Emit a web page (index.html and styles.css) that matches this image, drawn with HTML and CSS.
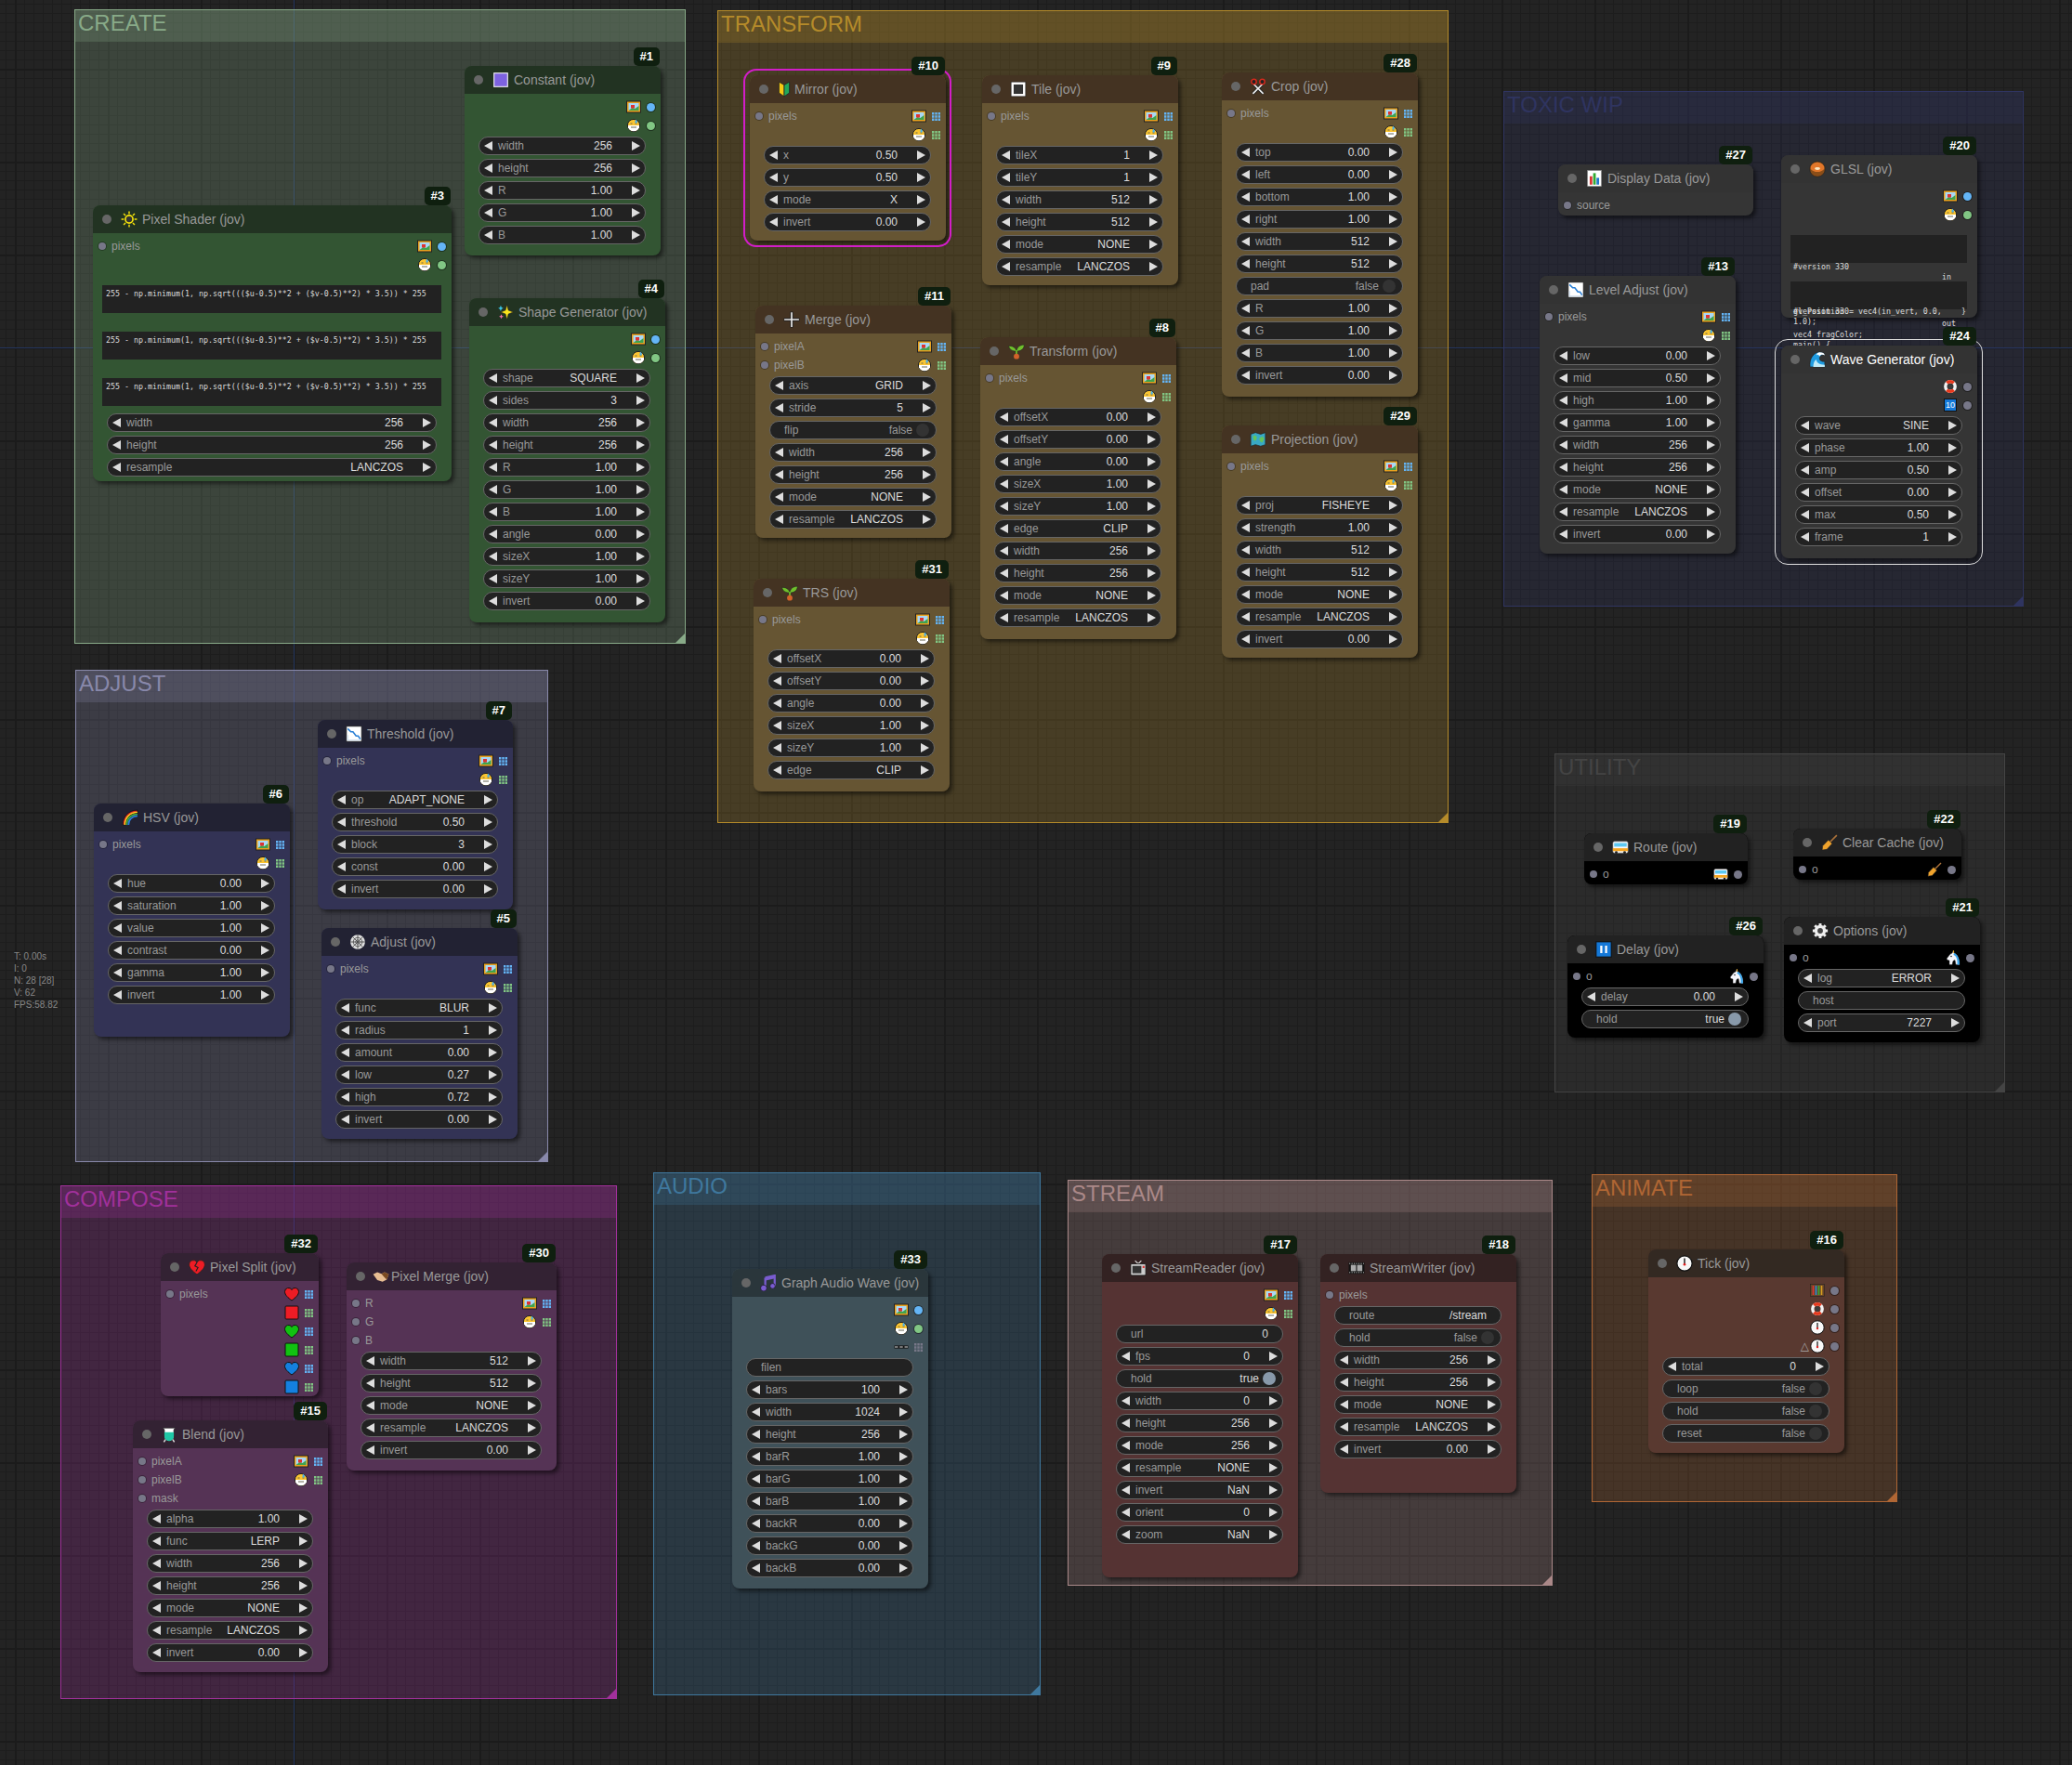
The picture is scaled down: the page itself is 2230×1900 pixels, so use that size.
FILE: index.html
```html
<!DOCTYPE html>
<html>
<head>
    <title>ComfyUI - Jovimetrix</title>
    <link rel="stylesheet" href="styles.css">
</head>
<body>
<svg class="sprite" xmlns="http://www.w3.org/2000/svg">
    <symbol id="pic" viewBox="0 0 16 16"><rect x=".5" y="2" width="15" height="12" fill="#e9a21f" stroke="#222"/><rect x="2.5" y="4" width="11" height="8" fill="#a9d8f5"/><path d="M2.5 12l4-3 3 1 4-3v5z" fill="#3fa34d"/><rect x="5" y="6" width="4" height="3.5" fill="#d33"/></symbol>
    <symbol id="mask" viewBox="0 0 16 16"><circle cx="8" cy="8" r="6.6" fill="#fbc531" stroke="#222"/><path d="M2 8h12v2.200a6.500 6.500 0 0 1-12 0z" fill="#fff"/><path d="M4.500 6h2M9.500 6h2M5 10h6" stroke="#665" fill="none"/><path d="M10.500 1.500c1 1.300 1.800 2.300 1.300 3.200a1.200 1.200 0 0 1-2.300 0c-.4-.9.500-1.900 1-3.200z" fill="#4ab0e8"/></symbol>
    <symbol id="grid" viewBox="0 0 9 9"><path d="M0 0h2.4v2.4H0zM3.3 0h2.4v2.4H3.3zM6.6 0H9v2.4H6.6zM0 3.3h2.4v2.4H0zM3.3 3.3h2.4v2.4H3.3zM6.6 3.3H9v2.4H6.6zM0 6.6h2.4V9H0zM3.3 6.6h2.4V9H3.3zM6.6 6.6H9V9H6.6z" fill="currentColor"/></symbol>
    <symbol id="sun" viewBox="0 0 16 16"><circle cx="8" cy="8" r="3.6" fill="#333" stroke="#f4e20c" stroke-width="1.5"/><path d="M8 .5V3M8 13v2.5M.5 8H3M13 8h2.500M2.700 2.700l1.800 1.800M11.500 11.500l1.800 1.800M2.700 13.300l1.800-1.800M11.500 4.500l1.800-1.800" stroke="#f4e20c" stroke-width="1.300"/></symbol>
    <symbol id="sq" viewBox="0 0 16 16"><rect x="1.500" y="1.500" width="13" height="13" fill="#7d62e0" stroke="#eee"/></symbol>
    <symbol id="spark" viewBox="0 0 16 16"><path d="M9.500 1l1.300 5.200L15.500 8l-4.700 1.800L9.500 15 8 9.800 3.500 8 8 6.200z" fill="#fbe31c" stroke="#222" stroke-width=".5"/><path d="M3.500 1.500l.8 2 1.700.7-1.700.8-.8 2-.8-2L1 4.200l1.700-.7z" fill="#3ac7e8"/><path d="M4 10l.7 1.600 1.500.6-1.500.6L4 14.500l-.7-1.700-1.500-.6 1.500-.6z" fill="#f06fa8"/></symbol>
    <symbol id="mirror" viewBox="0 0 16 16"><path d="M3 1l5 3v11L3 11.500z" fill="#f6c913" stroke="#222" stroke-width=".7"/><path d="M13 1L8 4v11l5-3.500z" fill="#23a85a" stroke="#222" stroke-width=".7"/></symbol>
    <symbol id="tile" viewBox="0 0 16 16"><rect x="1" y="1" width="14" height="14" fill="#fff" stroke="#222" stroke-width=".6"/><rect x="3.500" y="3.500" width="9" height="9" fill="#333"/></symbol>
    <symbol id="crop" viewBox="0 0 16 16"><path d="M4 6l9 9M12 6l-9 9" stroke="#222" stroke-width="3"/><path d="M4 6l9 9M12 6l-9 9" stroke="#eee" stroke-width="1.500"/><circle cx="4" cy="3.500" r="2.400" fill="#222" stroke="#d6281c" stroke-width="1.300"/><circle cx="12" cy="3.500" r="2.400" fill="#222" stroke="#d6281c" stroke-width="1.300"/></symbol>
    <symbol id="plus" viewBox="0 0 16 16"><path d="M8 .5v15M.5 8h15" stroke="#222" stroke-width="3"/><path d="M8 1v14M1 8h14" stroke="#e8e8e8" stroke-width="1.500"/></symbol>
    <symbol id="seed" viewBox="0 0 16 16"><path d="M8 8C7 4 4 3 .5 3c1 4 4 5 7.500 5zM8 8c.5-4 3-6 7.500-6-.5 4-3 6-7.500 6z" fill="#6fc02c" stroke="#222" stroke-width=".5"/><path d="M8 7v4" stroke="#6fc02c" stroke-width="1.500"/><circle cx="8" cy="13" r="2.600" fill="#d2622a"/></symbol>
    <symbol id="map" viewBox="0 0 16 16"><path d="M1 3l4.500-1.500 5 1.500L15 1.500V13l-4.500 1.500-5-1.500L1 14.500z" fill="#39a9c4" stroke="#222" stroke-width=".6"/><path d="M3 5l2-1 2 2-1 3-2 0zM9 7l3-2 2 2-2 4-2-1z" fill="#63c45b"/></symbol>
    <symbol id="bars" viewBox="0 0 16 16"><rect x="1.500" y=".5" width="13" height="15" fill="#fff" stroke="#999" stroke-width=".6"/><rect x="3.500" y="6" width="2.500" height="8" fill="#d33"/><rect x="6.800" y="3" width="2.500" height="11" fill="#3a3"/><rect x="10" y="7.500" width="2.500" height="6.500" fill="#27c"/></symbol>
    <symbol id="donut" viewBox="0 0 16 16"><circle cx="8" cy="8" r="7.400" fill="#8a4d18" stroke="#222" stroke-width=".6"/><path d="M1.500 7a6.500 5.500 0 0 1 13 0c0 2-2 2-3 3-2 1-5 1-7 0-1-1-3-1-3-3z" fill="#e2772a"/><ellipse cx="8" cy="7.500" rx="2.600" ry="1.300" fill="#fbe7c2"/></symbol>
    <symbol id="down" viewBox="0 0 16 16"><rect x=".8" y=".8" width="14.400" height="14.400" fill="#fff" stroke="#222" stroke-width=".6"/><path d="M2 3l3 3 2 0 3 4 2 0 2 3" fill="none" stroke="#2a7fd5" stroke-width="1.400"/><path d="M2 9v5h12" stroke="#cde" fill="none"/></symbol>
    <symbol id="wave" viewBox="0 0 16 16"><path d="M1 15C0 8 4 1 10 1c3 0 5 1 5 3-2-1-5 0-5 3 0 2 2 3 5 3v5z" fill="#1f9be0" stroke="#222" stroke-width=".5"/><path d="M10 1c3 0 5 1 5 3-2-1-4-1-5 1-1-2-2-2-3-1 0-2 2-3 3-3z" fill="#fff"/><path d="M4 15c0-3 1-6 3-7 0 3 3 5 8 5v2z" fill="#bfeaf7"/></symbol>
    <symbol id="rainbow" viewBox="0 0 16 16"><path d="M1 15C1 7 7 1 15 1v3C8.500 4 4 8.500 4 15z" fill="#e52d27" stroke="#111" stroke-width=".7"/><path d="M3 15C3 8 8 3 15 3" fill="none" stroke="#f7d51d" stroke-width="1.300"/><path d="M4.800 15c0-6 4.500-10.200 10.200-10.200" fill="none" stroke="#3bb64a" stroke-width="1.300"/><path d="M6.500 15c0-5 3.700-8.500 8.500-8.500" fill="none" stroke="#2d7ee0" stroke-width="1.500"/></symbol>
    <symbol id="web" viewBox="0 0 16 16"><circle cx="8" cy="8" r="7" fill="#ddd"/><path d="M8 1v14M1 8h14M3 3l10 10M13 3L3 13" stroke="#444" stroke-width=".7"/><circle cx="8" cy="8" r="4.200" fill="none" stroke="#444" stroke-width=".7"/><circle cx="8" cy="8" r="2" fill="none" stroke="#444" stroke-width=".7"/></symbol>
    <symbol id="broken" viewBox="0 0 16 16"><path d="M8 15C4 12 .5 9 .5 5.500A4 4 0 0 1 8 3.500a4 4 0 0 1 7.500 2C15.500 9 12 12 8 15z" fill="#ee1c25" stroke="#222" stroke-width=".7"/><path d="M8 3.500L6 7l3 1.500L7 12" fill="none" stroke="#222" stroke-width="1"/></symbol>
    <symbol id="heart" viewBox="0 0 16 16"><path d="M8 15C4 12 .5 9 .5 5.500A4 4 0 0 1 8 3.500a4 4 0 0 1 7.500 2C15.500 9 12 12 8 15z" fill="currentColor" stroke="#111"/></symbol>
    <symbol id="square" viewBox="0 0 16 16"><rect x="1" y="1" width="14" height="14" rx="1" fill="currentColor" stroke="#111"/></symbol>
    <symbol id="shake" viewBox="0 0 16 16"><path d="M.5 6l4-2 4 1.500 3-1.500 4 2-2 5-4 2-5-1.500z" fill="#e8be93"/><path d="M8.500 5.500l3-1.500 4 2-2 5-3-3z" fill="#7a4a22"/></symbol>
    <symbol id="flask" viewBox="0 0 16 16"><path d="M2 2h12l-1.500 1.500V10a4 4 0 0 1-9 0V3.500z" fill="#fff" stroke="#222" stroke-width=".6"/><path d="M3.500 6h9v4a4 4 0 0 1-9 0z" fill="#1fc7a6"/><path d="M4.500 13L3 15.500M11.500 13l1.500 2.500" stroke="#ddd" stroke-width="1.300"/></symbol>
    <symbol id="notes" viewBox="0 0 16 16"><path d="M5 3l9-2v10M5 3v10" fill="none" stroke="#7a5cd0" stroke-width="2"/><path d="M5 4.500l9-2" stroke="#7a5cd0" stroke-width="2.500"/><circle cx="3.500" cy="13" r="3" fill="#7a5cd0" stroke="#111" stroke-width=".6"/><circle cx="12" cy="11" r="2.500" fill="#7a5cd0" stroke="#111" stroke-width=".6"/></symbol>
    <symbol id="tv" viewBox="0 0 16 16"><path d="M5 1l3 3 3-3" fill="none" stroke="#ddd"/><rect x=".8" y="4" width="14.400" height="11" rx="1" fill="#ccc" stroke="#111" stroke-width=".7"/><rect x="2.500" y="6" width="8.500" height="7" fill="#333"/><rect x="12.200" y="6" width="1.800" height="2" fill="#d33"/></symbol>
    <symbol id="film" viewBox="0 0 16 16"><rect x=".5" y="2.500" width="15" height="11" fill="#111"/><rect x="2.500" y="5" width="5" height="6" fill="#aaa"/><rect x="8.500" y="5" width="5" height="6" fill="#aaa"/><path d="M1 3.700h14M1 12.300h14" stroke="#ddd" stroke-dasharray="1 1.200" stroke-width=".8"/></symbol>
    <symbol id="bus" viewBox="0 0 16 16"><rect x=".8" y="2.500" width="14.400" height="11" rx="1.500" fill="#f9fafc" stroke="#777" stroke-width=".5"/><rect x="2" y="4" width="12" height="3.500" fill="#5cc8f2"/><rect x=".8" y="9" width="14.400" height="2.800" fill="#f5a623"/><circle cx="4" cy="13" r="1.300" fill="#222"/><circle cx="12" cy="13" r="1.300" fill="#222"/></symbol>
    <symbol id="broom" viewBox="0 0 16 16"><path d="M15 1L8 8" stroke="#a9713a" stroke-width="1.500"/><path d="M7 5.500L10.500 9 5.500 14.500 1 15.200l.5-4z" fill="#f0a32c" stroke="#222" stroke-width=".5"/></symbol>
    <symbol id="pause" viewBox="0 0 16 16"><rect x=".7" y=".7" width="14.600" height="14.600" fill="#1478d8" stroke="#111"/><path d="M5.700 4.500v7M10.300 4.500v7" stroke="#fff" stroke-width="2"/></symbol>
    <symbol id="gear" viewBox="0 0 16 16"><circle cx="8" cy="8" r="5.500" fill="#eee"/><path d="M8 .8v14.400M.8 8h14.400M2.900 2.900l10.200 10.200M13.100 2.900L2.900 13.100" stroke="#eee" stroke-width="2.600"/><circle cx="8" cy="8" r="2.600" fill="#444"/></symbol>
    <symbol id="clock" viewBox="0 0 16 16"><circle cx="8" cy="8" r="7.200" fill="#f8f8f8" stroke="#111"/><path d="M8 3v5" stroke="#222" stroke-width="1.300"/><circle cx="8" cy="9" r="1.200" fill="#d22"/></symbol>
    <symbol id="uni" viewBox="0 0 16 16"><path d="M4 15.500V11L2 10.500 1 9l4-5 2-1 1-2.500L9 3c3.500 1 6 5.500 6 12.500h-4l-1-5-2 1-1 4z" fill="#f6f6fb" stroke="#222" stroke-width=".5"/><path d="M8 .5l1-.5.2 3-1 .2z" fill="#f6b93b"/><path d="M9 3c3.500 1 6 5.500 6 12.500h-2.500C13 10 11.500 6 8.500 5z" fill="#38a6ee"/><circle cx="6" cy="6.500" r=".8" fill="#222"/></symbol>
    <symbol id="ring" viewBox="0 0 16 16"><circle cx="8" cy="8" r="5.200" fill="none" stroke="#f2f2f2" stroke-width="3.400"/><path d="M4.300 4.300a5.200 5.200 0 0 1 7.400 0M11.700 11.700a5.200 5.200 0 0 1-7.400 0" fill="none" stroke="#e8391d" stroke-width="3.400"/><circle cx="8" cy="8" r="2.400" fill="#3b3b3b"/></symbol>
    <symbol id="books" viewBox="0 0 16 16"><rect x=".5" y="1.500" width="15" height="13" fill="#6a4527" stroke="#222" stroke-width=".6"/><path d="M3.500 3v10" stroke="#d33" stroke-width="1.600"/><path d="M6.500 3v10" stroke="#2a8ad6" stroke-width="1.600"/><path d="M9.500 3v10" stroke="#3a3" stroke-width="1.600"/><path d="M12.500 3v10" stroke="#d8a020" stroke-width="1.600"/></symbol>
    <symbol id="dash" viewBox="0 0 16 16"><path d="M.5 8h15" stroke="#111" stroke-width="3.200"/><path d="M1 8h3.500M6.200 8h3.500M11.500 8H15" stroke="#999" stroke-width="1.300"/></symbol>
</svg>

<div class="canvas">
    <div class="axis-v"></div>
    <div class="axis-h"></div>

    <section class="grp create"><h2>CREATE</h2></section>
    <section class="grp transform"><h2>TRANSFORM</h2></section>
    <section class="grp toxic"><h2>TOXIC WIP</h2></section>
    <section class="grp adjust"><h2>ADJUST</h2></section>
    <section class="grp utility"><h2>UTILITY</h2></section>
    <section class="grp compose"><h2>COMPOSE</h2></section>
    <section class="grp audio"><h2>AUDIO</h2></section>
    <section class="grp stream"><h2>STREAM</h2></section>
    <section class="grp animate"><h2>ANIMATE</h2></section>

    <div class="stats">T: 0.00s<br>I: 0<br>N: 28 [28]<br>V: 62<br>FPS:58.82</div>

    <!-- CREATE -->
    <article class="node green n1">
        <span class="badge">#1</span>
        <header><i></i><svg><use href="#sq"/></svg>Constant (jov)</header>
        <div class="slots">
            <div class="s"><svg class="ic"><use href="#pic"/></svg><u class="o blue"></u></div>
            <div class="s"><svg class="ic"><use href="#mask"/></svg><u class="o lime"></u></div>
        </div>
        <div class="w"><b>width</b><i>256</i></div>
        <div class="w"><b>height</b><i>256</i></div>
        <div class="w"><b>R</b><i>1.00</i></div>
        <div class="w"><b>G</b><i>1.00</i></div>
        <div class="w"><b>B</b><i>1.00</i></div>
    </article>
    <article class="node green n3">
        <span class="badge">#3</span>
        <header><i></i><svg><use href="#sun"/></svg>Pixel Shader (jov)</header>
        <div class="slots">
            <div class="s"><em>pixels</em><svg class="ic"><use href="#pic"/></svg><u class="o blue"></u></div>
            <div class="s"><svg class="ic"><use href="#mask"/></svg><u class="o lime"></u></div>
        </div>
        <div class="ta">255 - np.minimum(1, np.sqrt((($u-0.5)**2 + ($v-0.5)**2) * 3.5)) * 255</div>
        <div class="ta">255 - np.minimum(1, np.sqrt((($u-0.5)**2 + ($v-0.5)**2) * 3.5)) * 255</div>
        <div class="ta">255 - np.minimum(1, np.sqrt((($u-0.5)**2 + ($v-0.5)**2) * 3.5)) * 255</div>
        <div class="w"><b>width</b><i>256</i></div>
        <div class="w"><b>height</b><i>256</i></div>
        <div class="w"><b>resample</b><i>LANCZOS</i></div>
    </article>
    <article class="node green n4">
        <span class="badge">#4</span>
        <header><i></i><svg><use href="#spark"/></svg>Shape Generator (jov)</header>
        <div class="slots">
            <div class="s"><svg class="ic"><use href="#pic"/></svg><u class="o blue"></u></div>
            <div class="s"><svg class="ic"><use href="#mask"/></svg><u class="o lime"></u></div>
        </div>
        <div class="w"><b>shape</b><i>SQUARE</i></div>
        <div class="w"><b>sides</b><i>3</i></div>
        <div class="w"><b>width</b><i>256</i></div>
        <div class="w"><b>height</b><i>256</i></div>
        <div class="w"><b>R</b><i>1.00</i></div>
        <div class="w"><b>G</b><i>1.00</i></div>
        <div class="w"><b>B</b><i>1.00</i></div>
        <div class="w"><b>angle</b><i>0.00</i></div>
        <div class="w"><b>sizeX</b><i>1.00</i></div>
        <div class="w"><b>sizeY</b><i>1.00</i></div>
        <div class="w"><b>invert</b><i>0.00</i></div>
    </article>

    <!-- TRANSFORM -->
    <article class="node yellow n10 sel-pink nar">
        <span class="badge">#10</span>
        <header><i></i><svg><use href="#mirror"/></svg>Mirror (jov)</header>
        <div class="slots">
            <div class="s"><em>pixels</em><svg class="ic"><use href="#pic"/></svg><svg class="g blue"><use href="#grid"/></svg></div>
            <div class="s"><svg class="ic"><use href="#mask"/></svg><svg class="g lime"><use href="#grid"/></svg></div>
        </div>
        <div class="w"><b>x</b><i>0.50</i></div>
        <div class="w"><b>y</b><i>0.50</i></div>
        <div class="w"><b>mode</b><i>X</i></div>
        <div class="w"><b>invert</b><i>0.00</i></div>
    </article>
    <article class="node yellow n9">
        <span class="badge">#9</span>
        <header><i></i><svg><use href="#tile"/></svg>Tile (jov)</header>
        <div class="slots">
            <div class="s"><em>pixels</em><svg class="ic"><use href="#pic"/></svg><svg class="g blue"><use href="#grid"/></svg></div>
            <div class="s"><svg class="ic"><use href="#mask"/></svg><svg class="g lime"><use href="#grid"/></svg></div>
        </div>
        <div class="w"><b>tileX</b><i>1</i></div>
        <div class="w"><b>tileY</b><i>1</i></div>
        <div class="w"><b>width</b><i>512</i></div>
        <div class="w"><b>height</b><i>512</i></div>
        <div class="w"><b>mode</b><i>NONE</i></div>
        <div class="w"><b>resample</b><i>LANCZOS</i></div>
    </article>
    <article class="node yellow n28">
        <span class="badge">#28</span>
        <header><i></i><svg><use href="#crop"/></svg>Crop (jov)</header>
        <div class="slots">
            <div class="s"><em>pixels</em><svg class="ic"><use href="#pic"/></svg><svg class="g blue"><use href="#grid"/></svg></div>
            <div class="s"><svg class="ic"><use href="#mask"/></svg><svg class="g lime"><use href="#grid"/></svg></div>
        </div>
        <div class="w"><b>top</b><i>0.00</i></div>
        <div class="w"><b>left</b><i>0.00</i></div>
        <div class="w"><b>bottom</b><i>1.00</i></div>
        <div class="w"><b>right</b><i>1.00</i></div>
        <div class="w"><b>width</b><i>512</i></div>
        <div class="w"><b>height</b><i>512</i></div>
        <div class="w tg"><b>pad</b><i>false</i></div>
        <div class="w"><b>R</b><i>1.00</i></div>
        <div class="w"><b>G</b><i>1.00</i></div>
        <div class="w"><b>B</b><i>1.00</i></div>
        <div class="w"><b>invert</b><i>0.00</i></div>
    </article>
    <article class="node yellow n11">
        <span class="badge">#11</span>
        <header><i></i><svg><use href="#plus"/></svg>Merge (jov)</header>
        <div class="slots">
            <div class="s"><em>pixelA</em><svg class="ic"><use href="#pic"/></svg><svg class="g blue"><use href="#grid"/></svg></div>
            <div class="s"><em>pixelB</em><svg class="ic"><use href="#mask"/></svg><svg class="g lime"><use href="#grid"/></svg></div>
        </div>
        <div class="w"><b>axis</b><i>GRID</i></div>
        <div class="w"><b>stride</b><i>5</i></div>
        <div class="w tg"><b>flip</b><i>false</i></div>
        <div class="w"><b>width</b><i>256</i></div>
        <div class="w"><b>height</b><i>256</i></div>
        <div class="w"><b>mode</b><i>NONE</i></div>
        <div class="w"><b>resample</b><i>LANCZOS</i></div>
    </article>
    <article class="node yellow n8">
        <span class="badge">#8</span>
        <header><i></i><svg><use href="#seed"/></svg>Transform (jov)</header>
        <div class="slots">
            <div class="s"><em>pixels</em><svg class="ic"><use href="#pic"/></svg><svg class="g blue"><use href="#grid"/></svg></div>
            <div class="s"><svg class="ic"><use href="#mask"/></svg><svg class="g lime"><use href="#grid"/></svg></div>
        </div>
        <div class="w"><b>offsetX</b><i>0.00</i></div>
        <div class="w"><b>offsetY</b><i>0.00</i></div>
        <div class="w"><b>angle</b><i>0.00</i></div>
        <div class="w"><b>sizeX</b><i>1.00</i></div>
        <div class="w"><b>sizeY</b><i>1.00</i></div>
        <div class="w"><b>edge</b><i>CLIP</i></div>
        <div class="w"><b>width</b><i>256</i></div>
        <div class="w"><b>height</b><i>256</i></div>
        <div class="w"><b>mode</b><i>NONE</i></div>
        <div class="w"><b>resample</b><i>LANCZOS</i></div>
    </article>
    <article class="node yellow n29">
        <span class="badge">#29</span>
        <header><i></i><svg><use href="#map"/></svg>Projection (jov)</header>
        <div class="slots">
            <div class="s"><em>pixels</em><svg class="ic"><use href="#pic"/></svg><svg class="g blue"><use href="#grid"/></svg></div>
            <div class="s"><svg class="ic"><use href="#mask"/></svg><svg class="g lime"><use href="#grid"/></svg></div>
        </div>
        <div class="w"><b>proj</b><i>FISHEYE</i></div>
        <div class="w"><b>strength</b><i>1.00</i></div>
        <div class="w"><b>width</b><i>512</i></div>
        <div class="w"><b>height</b><i>512</i></div>
        <div class="w"><b>mode</b><i>NONE</i></div>
        <div class="w"><b>resample</b><i>LANCZOS</i></div>
        <div class="w"><b>invert</b><i>0.00</i></div>
    </article>
    <article class="node yellow n31">
        <span class="badge">#31</span>
        <header><i></i><svg><use href="#seed"/></svg>TRS (jov)</header>
        <div class="slots">
            <div class="s"><em>pixels</em><svg class="ic"><use href="#pic"/></svg><svg class="g blue"><use href="#grid"/></svg></div>
            <div class="s"><svg class="ic"><use href="#mask"/></svg><svg class="g lime"><use href="#grid"/></svg></div>
        </div>
        <div class="w"><b>offsetX</b><i>0.00</i></div>
        <div class="w"><b>offsetY</b><i>0.00</i></div>
        <div class="w"><b>angle</b><i>0.00</i></div>
        <div class="w"><b>sizeX</b><i>1.00</i></div>
        <div class="w"><b>sizeY</b><i>1.00</i></div>
        <div class="w"><b>edge</b><i>CLIP</i></div>
    </article>

    <!-- TOXIC WIP -->
    <article class="node plain n27">
        <span class="badge">#27</span>
        <header><i></i><svg><use href="#bars"/></svg>Display Data (jov)</header>
        <div class="slots">
            <div class="s"><em>source</em></div>
        </div>
    </article>
    <article class="node plain n20">
        <span class="badge">#20</span>
        <header><i></i><svg><use href="#donut"/></svg>GLSL (jov)</header>
        <div class="slots">
            <div class="s"><svg class="ic"><use href="#pic"/></svg><u class="o blue"></u></div>
            <div class="s"><svg class="ic"><use href="#mask"/></svg><u class="o lime"></u></div>
        </div>
        <div class="ta short"></div>
        <div class="ta short"></div>
        <span class="code c1">#version 330</span>
        <span class="code c2">in</span>
        <span class="code c3">#version 330</span>
        <span class="code c4">gl_Position = vec4(in_vert, 0.0,</span>
        <span class="code c5">}</span>
        <span class="code c6">1.0);</span>
        <span class="code c7">out</span>
        <span class="code c8">vec4 fragColor;</span>
        <span class="code c9">main() {</span>
    </article>
    <article class="node plain n13">
        <span class="badge">#13</span>
        <header><i></i><svg><use href="#down"/></svg>Level Adjust (jov)</header>
        <div class="slots">
            <div class="s"><em>pixels</em><svg class="ic"><use href="#pic"/></svg><svg class="g blue"><use href="#grid"/></svg></div>
            <div class="s"><svg class="ic"><use href="#mask"/></svg><svg class="g lime"><use href="#grid"/></svg></div>
        </div>
        <div class="w"><b>low</b><i>0.00</i></div>
        <div class="w"><b>mid</b><i>0.50</i></div>
        <div class="w"><b>high</b><i>1.00</i></div>
        <div class="w"><b>gamma</b><i>1.00</i></div>
        <div class="w"><b>width</b><i>256</i></div>
        <div class="w"><b>height</b><i>256</i></div>
        <div class="w"><b>mode</b><i>NONE</i></div>
        <div class="w"><b>resample</b><i>LANCZOS</i></div>
        <div class="w"><b>invert</b><i>0.00</i></div>
    </article>
    <article class="node plain n24 sel-white">
        <span class="badge">#24</span>
        <header><i></i><svg><use href="#wave"/></svg>Wave Generator (jov)</header>
        <div class="slots">
            <div class="s"><svg class="ic"><use href="#ring"/></svg><u class="o grey"></u></div>
            <div class="s"><span class="keycap">10</span><u class="o grey"></u></div>
        </div>
        <div class="w"><b>wave</b><i>SINE</i></div>
        <div class="w"><b>phase</b><i>1.00</i></div>
        <div class="w"><b>amp</b><i>0.50</i></div>
        <div class="w"><b>offset</b><i>0.00</i></div>
        <div class="w"><b>max</b><i>0.50</i></div>
        <div class="w"><b>frame</b><i>1</i></div>
    </article>

    <!-- ADJUST -->
    <article class="node blue-n n6">
        <span class="badge">#6</span>
        <header><i></i><svg><use href="#rainbow"/></svg>HSV (jov)</header>
        <div class="slots">
            <div class="s"><em>pixels</em><svg class="ic"><use href="#pic"/></svg><svg class="g blue"><use href="#grid"/></svg></div>
            <div class="s"><svg class="ic"><use href="#mask"/></svg><svg class="g lime"><use href="#grid"/></svg></div>
        </div>
        <div class="w"><b>hue</b><i>0.00</i></div>
        <div class="w"><b>saturation</b><i>1.00</i></div>
        <div class="w"><b>value</b><i>1.00</i></div>
        <div class="w"><b>contrast</b><i>0.00</i></div>
        <div class="w"><b>gamma</b><i>1.00</i></div>
        <div class="w"><b>invert</b><i>1.00</i></div>
    </article>
    <article class="node blue-n n7">
        <span class="badge">#7</span>
        <header><i></i><svg><use href="#down"/></svg>Threshold (jov)</header>
        <div class="slots">
            <div class="s"><em>pixels</em><svg class="ic"><use href="#pic"/></svg><svg class="g blue"><use href="#grid"/></svg></div>
            <div class="s"><svg class="ic"><use href="#mask"/></svg><svg class="g lime"><use href="#grid"/></svg></div>
        </div>
        <div class="w"><b>op</b><i>ADAPT_NONE</i></div>
        <div class="w"><b>threshold</b><i>0.50</i></div>
        <div class="w"><b>block</b><i>3</i></div>
        <div class="w"><b>const</b><i>0.00</i></div>
        <div class="w"><b>invert</b><i>0.00</i></div>
    </article>
    <article class="node blue-n n5">
        <span class="badge">#5</span>
        <header><i></i><svg><use href="#web"/></svg>Adjust (jov)</header>
        <div class="slots">
            <div class="s"><em>pixels</em><svg class="ic"><use href="#pic"/></svg><svg class="g blue"><use href="#grid"/></svg></div>
            <div class="s"><svg class="ic"><use href="#mask"/></svg><svg class="g lime"><use href="#grid"/></svg></div>
        </div>
        <div class="w"><b>func</b><i>BLUR</i></div>
        <div class="w"><b>radius</b><i>1</i></div>
        <div class="w"><b>amount</b><i>0.00</i></div>
        <div class="w"><b>low</b><i>0.27</i></div>
        <div class="w"><b>high</b><i>0.72</i></div>
        <div class="w"><b>invert</b><i>0.00</i></div>
    </article>

    <!-- UTILITY -->
    <article class="node black n19">
        <span class="badge">#19</span>
        <header><i></i><svg><use href="#bus"/></svg>Route (jov)</header>
        <div class="slots">
            <div class="s"><em>o</em><svg class="ic"><use href="#bus"/></svg><u class="o grey"></u></div>
        </div>
    </article>
    <article class="node black n22">
        <span class="badge">#22</span>
        <header><i></i><svg><use href="#broom"/></svg>Clear Cache (jov)</header>
        <div class="slots">
            <div class="s"><em>o</em><svg class="ic"><use href="#broom"/></svg><u class="o grey"></u></div>
        </div>
    </article>
    <article class="node black n26">
        <span class="badge">#26</span>
        <header><i></i><svg><use href="#pause"/></svg>Delay (jov)</header>
        <div class="slots">
            <div class="s"><em>o</em><svg class="ic"><use href="#uni"/></svg><u class="o grey"></u></div>
        </div>
        <div class="w"><b>delay</b><i>0.00</i></div>
        <div class="w tg on"><b>hold</b><i>true</i></div>
    </article>
    <article class="node black n21">
        <span class="badge">#21</span>
        <header><i></i><svg><use href="#gear"/></svg>Options (jov)</header>
        <div class="slots">
            <div class="s"><em>o</em><svg class="ic"><use href="#uni"/></svg><u class="o grey"></u></div>
        </div>
        <div class="w"><b>log</b><i>ERROR</i></div>
        <div class="w tx"><b>host</b><i></i></div>
        <div class="w"><b>port</b><i>7227</i></div>
    </article>

    <!-- COMPOSE -->
    <article class="node purple n32">
        <span class="badge">#32</span>
        <header><i></i><svg><use href="#broken"/></svg>Pixel Split (jov)</header>
        <div class="slots">
            <div class="s"><em>pixels</em><svg class="ic c-red"><use href="#heart"/></svg><svg class="g blue"><use href="#grid"/></svg></div>
            <div class="s"><svg class="ic c-red"><use href="#square"/></svg><svg class="g lime"><use href="#grid"/></svg></div>
            <div class="s"><svg class="ic c-green"><use href="#heart"/></svg><svg class="g blue"><use href="#grid"/></svg></div>
            <div class="s"><svg class="ic c-green"><use href="#square"/></svg><svg class="g lime"><use href="#grid"/></svg></div>
            <div class="s"><svg class="ic c-blue"><use href="#heart"/></svg><svg class="g blue"><use href="#grid"/></svg></div>
            <div class="s"><svg class="ic c-blue"><use href="#square"/></svg><svg class="g lime"><use href="#grid"/></svg></div>
        </div>
    </article>
    <article class="node purple n30 nar">
        <span class="badge">#30</span>
        <header><i></i><svg><use href="#shake"/></svg>Pixel Merge (jov)</header>
        <div class="slots">
            <div class="s"><em>R</em><svg class="ic"><use href="#pic"/></svg><svg class="g blue"><use href="#grid"/></svg></div>
            <div class="s"><em>G</em><svg class="ic"><use href="#mask"/></svg><svg class="g lime"><use href="#grid"/></svg></div>
            <div class="s"><em>B</em></div>
        </div>
        <div class="w"><b>width</b><i>512</i></div>
        <div class="w"><b>height</b><i>512</i></div>
        <div class="w"><b>mode</b><i>NONE</i></div>
        <div class="w"><b>resample</b><i>LANCZOS</i></div>
        <div class="w"><b>invert</b><i>0.00</i></div>
    </article>
    <article class="node purple n15">
        <span class="badge">#15</span>
        <header><i></i><svg><use href="#flask"/></svg>Blend (jov)</header>
        <div class="slots">
            <div class="s"><em>pixelA</em><svg class="ic"><use href="#pic"/></svg><svg class="g blue"><use href="#grid"/></svg></div>
            <div class="s"><em>pixelB</em><svg class="ic"><use href="#mask"/></svg><svg class="g lime"><use href="#grid"/></svg></div>
            <div class="s"><em>mask</em></div>
        </div>
        <div class="w"><b>alpha</b><i>1.00</i></div>
        <div class="w"><b>func</b><i>LERP</i></div>
        <div class="w"><b>width</b><i>256</i></div>
        <div class="w"><b>height</b><i>256</i></div>
        <div class="w"><b>mode</b><i>NONE</i></div>
        <div class="w"><b>resample</b><i>LANCZOS</i></div>
        <div class="w"><b>invert</b><i>0.00</i></div>
    </article>

    <!-- AUDIO -->
    <article class="node pale n33">
        <span class="badge">#33</span>
        <header><i></i><svg><use href="#notes"/></svg>Graph Audio Wave (jov)</header>
        <div class="slots">
            <div class="s"><svg class="ic"><use href="#pic"/></svg><u class="o blue"></u></div>
            <div class="s"><svg class="ic"><use href="#mask"/></svg><u class="o lime"></u></div>
            <div class="s"><svg class="ic"><use href="#dash"/></svg><svg class="g grey"><use href="#grid"/></svg></div>
        </div>
        <div class="w tx"><b>filen</b><i></i></div>
        <div class="w"><b>bars</b><i>100</i></div>
        <div class="w"><b>width</b><i>1024</i></div>
        <div class="w"><b>height</b><i>256</i></div>
        <div class="w"><b>barR</b><i>1.00</i></div>
        <div class="w"><b>barG</b><i>1.00</i></div>
        <div class="w"><b>barB</b><i>1.00</i></div>
        <div class="w"><b>backR</b><i>0.00</i></div>
        <div class="w"><b>backG</b><i>0.00</i></div>
        <div class="w"><b>backB</b><i>0.00</i></div>
    </article>

    <!-- STREAM -->
    <article class="node red n17">
        <span class="badge">#17</span>
        <header><i></i><svg><use href="#tv"/></svg>StreamReader (jov)</header>
        <div class="slots">
            <div class="s"><svg class="ic"><use href="#pic"/></svg><svg class="g blue"><use href="#grid"/></svg></div>
            <div class="s"><svg class="ic"><use href="#mask"/></svg><svg class="g lime"><use href="#grid"/></svg></div>
        </div>
        <div class="w tx"><b>url</b><i>0</i></div>
        <div class="w"><b>fps</b><i>0</i></div>
        <div class="w tg on"><b>hold</b><i>true</i></div>
        <div class="w"><b>width</b><i>0</i></div>
        <div class="w"><b>height</b><i>256</i></div>
        <div class="w"><b>mode</b><i>256</i></div>
        <div class="w"><b>resample</b><i>NONE</i></div>
        <div class="w"><b>invert</b><i>NaN</i></div>
        <div class="w"><b>orient</b><i>0</i></div>
        <div class="w"><b>zoom</b><i>NaN</i></div>
    </article>
    <article class="node red n18">
        <span class="badge">#18</span>
        <header><i></i><svg><use href="#film"/></svg>StreamWriter (jov)</header>
        <div class="slots">
            <div class="s"><em>pixels</em></div>
        </div>
        <div class="w tx"><b>route</b><i>/stream</i></div>
        <div class="w tg"><b>hold</b><i>false</i></div>
        <div class="w"><b>width</b><i>256</i></div>
        <div class="w"><b>height</b><i>256</i></div>
        <div class="w"><b>mode</b><i>NONE</i></div>
        <div class="w"><b>resample</b><i>LANCZOS</i></div>
        <div class="w"><b>invert</b><i>0.00</i></div>
    </article>

    <!-- ANIMATE -->
    <article class="node brown n16">
        <span class="badge">#16</span>
        <header><i></i><svg><use href="#clock"/></svg>Tick (jov)</header>
        <div class="slots">
            <div class="s"><svg class="ic"><use href="#books"/></svg><u class="o grey"></u></div>
            <div class="s"><svg class="ic"><use href="#ring"/></svg><u class="o grey"></u></div>
            <div class="s"><svg class="ic"><use href="#clock"/></svg><u class="o grey"></u></div>
            <div class="s"><span class="delta">△</span><svg class="ic"><use href="#clock"/></svg><u class="o grey"></u></div>
        </div>
        <div class="w"><b>total</b><i>0</i></div>
        <div class="w tg"><b>loop</b><i>false</i></div>
        <div class="w tg"><b>hold</b><i>false</i></div>
        <div class="w tg"><b>reset</b><i>false</i></div>
    </article>
</div>
</body>
</html>
```

FILE: styles.css
```css
* {
    box-sizing: border-box;
}

body {
    margin: 0;
    font-family: 'Liberation Sans', Arial, sans-serif;
    overflow: hidden;
}

.sprite {
    position: absolute;
    width: 0;
    height: 0;
}

/* free canvas, grid drawn like the litegraph tile */
.canvas {
    position: relative;
    width: 2230px;
    height: 1900px;
    overflow: hidden;
    background-color: #232323;
    background-image:
        linear-gradient(90deg, #1b1b1b 2px, transparent 2px),
        linear-gradient(#1b1b1b 2px, transparent 2px),
        linear-gradient(90deg, #1d1d1d 1px, transparent 1px),
        linear-gradient(#1d1d1d 1px, transparent 1px);
    background-size: 100px 100px, 100px 100px, 10px 10px, 10px 10px;
    background-position: 16px 0, 0 74px, 6px 0, 0 4px;
}

.axis-v {
    position: absolute;
    left: 316px;
    top: 0;
    width: 1px;
    height: 100%;
    background: #24365f;
}

.axis-h {
    position: absolute;
    left: 0;
    top: 374px;
    width: 100%;
    height: 1px;
    background: #24365f;
}

.stats {
    position: absolute;
    left: 15px;
    top: 1023px;
    font-size: 10px;
    line-height: 13px;
    color: #888;
}

/* groups */
.grp {
    position: absolute;
    border: 1px solid var(--g);
}

.grp::before {
    content: "";
    position: absolute;
    inset: 0;
    background: var(--g);
    opacity: 0.25;
}

.grp::after {
    content: "";
    position: absolute;
    right: 0;
    bottom: 0;
    width: 10px;
    height: 10px;
    background: var(--g);
    clip-path: polygon(100% 0, 100% 100%, 0 100%);
}

.grp h2 {
    position: relative;
    margin: 0;
    height: 34px;
    padding-left: 3px;
    font-size: 24px;
    font-weight: normal;
    line-height: 28px;
    color: var(--g);
    background: color-mix(in srgb, var(--g) 25%, transparent);
}

.create { --g: #88aa88; left: 80px; top: 10px; width: 658px; height: 683px; }
.transform { --g: #b58b2a; left: 772px; top: 11px; width: 787px; height: 875px; }
.toxic { --g: #2f3460; left: 1618px; top: 98px; width: 560px; height: 555px; }
.adjust { --g: #8888aa; left: 81px; top: 721px; width: 509px; height: 530px; }
.utility { --g: #444444; left: 1673px; top: 811px; width: 485px; height: 365px; }
.compose { --g: #a1309b; left: 65px; top: 1276px; width: 599px; height: 553px; }
.audio { --g: #3f789e; left: 703px; top: 1262px; width: 417px; height: 563px; }
.stream { --g: #aa8888; left: 1149px; top: 1270px; width: 522px; height: 437px; }
.animate { --g: #b06634; left: 1713px; top: 1264px; width: 329px; height: 353px; }

/* nodes */
.node {
    position: absolute;
    border-radius: 8px;
    background: var(--b);
    box-shadow: 3px 3px 4px rgba(0, 0, 0, 0.5);
    font-size: 12px;
    color: #999;
}

.green { --t: #223322; --b: #335533; }
.yellow { --t: #443322; --b: #665533; }
.plain { --t: #333333; --b: #353535; }
.blue-n { --t: #222233; --b: #333355; }
.black { --t: #222222; --b: #000000; }
.purple { --t: #332233; --b: #553355; }
.pale { --t: #2a363b; --b: #3f5159; }
.red { --t: #332222; --b: #553333; }
.brown { --t: #332922; --b: #593930; }

.n1 { left: 500px; top: 71px; width: 211px; height: 204px; }
.n3 { left: 100px; top: 221px; width: 386px; height: 297px; }
.n4 { left: 505px; top: 321px; width: 211px; height: 349px; }
.n10 { left: 807px; top: 81px; width: 211px; height: 178px; }
.n9 { left: 1057px; top: 81px; width: 211px; height: 226px; }
.n28 { left: 1315px; top: 78px; width: 211px; height: 349px; }
.n11 { left: 813px; top: 329px; width: 211px; height: 250px; }
.n8 { left: 1055px; top: 363px; width: 211px; height: 325px; }
.n29 { left: 1315px; top: 458px; width: 211px; height: 250px; }
.n31 { left: 811px; top: 623px; width: 211px; height: 229px; }
.n27 { left: 1677px; top: 177px; width: 210px; height: 55px; }
.n20 { left: 1917px; top: 167px; width: 211px; height: 175px; }
.n13 { left: 1657px; top: 297px; width: 211px; height: 299px; }
.n24 { left: 1917px; top: 372px; width: 211px; height: 229px; }
.n6 { left: 101px; top: 865px; width: 211px; height: 251px; }
.n7 { left: 342px; top: 775px; width: 210px; height: 204px; }
.n5 { left: 346px; top: 999px; width: 211px; height: 227px; }
.n19 { left: 1705px; top: 897px; width: 176px; height: 55px; }
.n22 { left: 1930px; top: 892px; width: 181px; height: 55px; }
.n26 { left: 1687px; top: 1007px; width: 211px; height: 110px; }
.n21 { left: 1920px; top: 987px; width: 211px; height: 135px; }
.n32 { left: 173px; top: 1349px; width: 170px; height: 154px; }
.n30 { left: 373px; top: 1359px; width: 226px; height: 224px; }
.n15 { left: 143px; top: 1529px; width: 210px; height: 271px; }
.n33 { left: 788px; top: 1366px; width: 211px; height: 344px; }
.n17 { left: 1186px; top: 1350px; width: 211px; height: 348px; }
.n18 { left: 1421px; top: 1350px; width: 211px; height: 257px; }
.n16 { left: 1774px; top: 1345px; width: 211px; height: 219px; }

.node header {
    display: flex;
    align-items: center;
    height: 30px;
    padding-left: 10px;
    border-radius: 8px 8px 0 0;
    background: var(--t);
    font-size: 14px;
    white-space: nowrap;
}

.node header i {
    width: 10px;
    height: 10px;
    border-radius: 50%;
    background: #666;
}

.node header svg {
    width: 18px;
    height: 18px;
    margin: 0 5px 0 10px;
}

.nar header svg {
    margin: 0 2px 0 8px;
}

.badge {
    position: absolute;
    right: 1px;
    bottom: 100%;
    height: 20px;
    padding: 0 7px;
    border-radius: 5px;
    background: #0f1f0f;
    color: #fff;
    font-size: 13px;
    font-weight: bold;
    line-height: 20px;
}

/* selected outline */
.sel-pink::before,
.sel-white::before {
    content: "";
    position: absolute;
    inset: -7px -6px -7px -7px;
    border-radius: 14px;
}

.sel-pink::before {
    border: 2px solid #d21dc8;
}

.sel-white::before {
    border: 1.5px solid #dcdcdc;
}

.sel-white header {
    color: #fff;
}

.sel-pink .badge,
.sel-white .badge {
    z-index: 1;
}

/* slot rows */
.slots {
    padding: 4px 0 2px;
}

.s {
    display: flex;
    align-items: center;
    justify-content: flex-end;
    gap: 6px;
    height: 20px;
    padding-right: 6px;
}

.s em {
    display: flex;
    align-items: center;
    margin-right: auto;
    padding-left: 6px;
    font-style: normal;
}

.s em::before {
    content: "";
    width: 8px;
    height: 8px;
    margin-right: 6px;
    border-radius: 50%;
    background: #778;
    box-shadow: 0 0 0 1px rgba(0, 0, 0, 0.3);
}

.ic {
    width: 16px;
    height: 16px;
}

.o {
    width: 9px;
    height: 9px;
    border-radius: 50%;
    background: currentColor;
    box-shadow: 0 0 0 1px rgba(0, 0, 0, 0.4);
}

.g {
    width: 9px;
    height: 9px;
}

.blue { color: #64b5f6; }
.lime { color: #81c784; }
.grey { color: #778; }
.c-red { color: #ee1c25; }
.c-green { color: #11c211; }
.c-blue { color: #1480e0; }

.keycap {
    width: 14px;
    height: 14px;
    margin: 0 1px;
    border: 1px solid #111;
    background: #1478d8;
    color: #fff;
    font-size: 9px;
    line-height: 12px;
    text-align: center;
}

.delta {
    margin-right: -5px;
    font-size: 12px;
    color: #aaa;
    font-family: 'DejaVu Sans', sans-serif;
}

/* widgets */
.w {
    position: relative;
    display: flex;
    justify-content: space-between;
    align-items: center;
    height: 20px;
    margin: 0 16px 4px 15px;
    padding: 0 35px 0 20px;
    border: 1px solid #666;
    border-radius: 10px;
    background: #222;
    white-space: nowrap;
}

.w b {
    font-weight: normal;
    color: #999;
}

.w i {
    font-style: normal;
    color: #ddd;
}

.w::before,
.w::after {
    content: "";
    position: absolute;
    top: 4px;
    width: 9px;
    height: 10px;
    background: #ddd;
}

.w::before {
    left: 5px;
    clip-path: polygon(100% 0, 100% 100%, 0 50%);
}

.w::after {
    right: 5px;
    clip-path: polygon(0 0, 100% 50%, 0 100%);
}

.tx,
.tg {
    padding: 0 15px;
}

.tx::before,
.tx::after,
.tg::before {
    display: none;
}

.tg {
    padding-right: 25px;
}

.tg i {
    color: #999;
}

.tg::after {
    top: 2px;
    right: 7px;
    width: 14px;
    height: 14px;
    border-radius: 50%;
    background: #333;
    clip-path: none;
}

.tg.on i {
    color: #ddd;
}

.tg.on::after {
    background: #89a;
}

/* textareas */
.ta {
    height: 30px;
    margin: 0 11px 8px 10px;
    padding: 3px 4px;
    background: #222;
    color: #ddd;
    font-family: 'DejaVu Sans Mono', monospace;
    font-size: 8.3px;
    line-height: 12px;
    white-space: nowrap;
}

.ta + .ta {
    margin-top: 20px;
}

.slots + .ta {
    margin-top: 10px;
}

/* GLSL source spilling out of its box */
.code {
    position: absolute;
    color: #ddd;
    font-family: 'DejaVu Sans Mono', monospace;
    font-size: 8.3px;
    line-height: 12px;
    white-space: nowrap;
}

.c1 { left: 13px; top: 114px; }
.c2 { left: 173px; top: 125px; }
.c3 { left: 13px; top: 162px; }
.c4 { left: 13px; top: 162px; }
.c5 { left: 194px; top: 162px; }
.c6 { left: 13px; top: 173px; }
.c7 { left: 173px; top: 175px; }
.c8 { left: 13px; top: 187px; }
.c9 { left: 13px; top: 198px; }
```
